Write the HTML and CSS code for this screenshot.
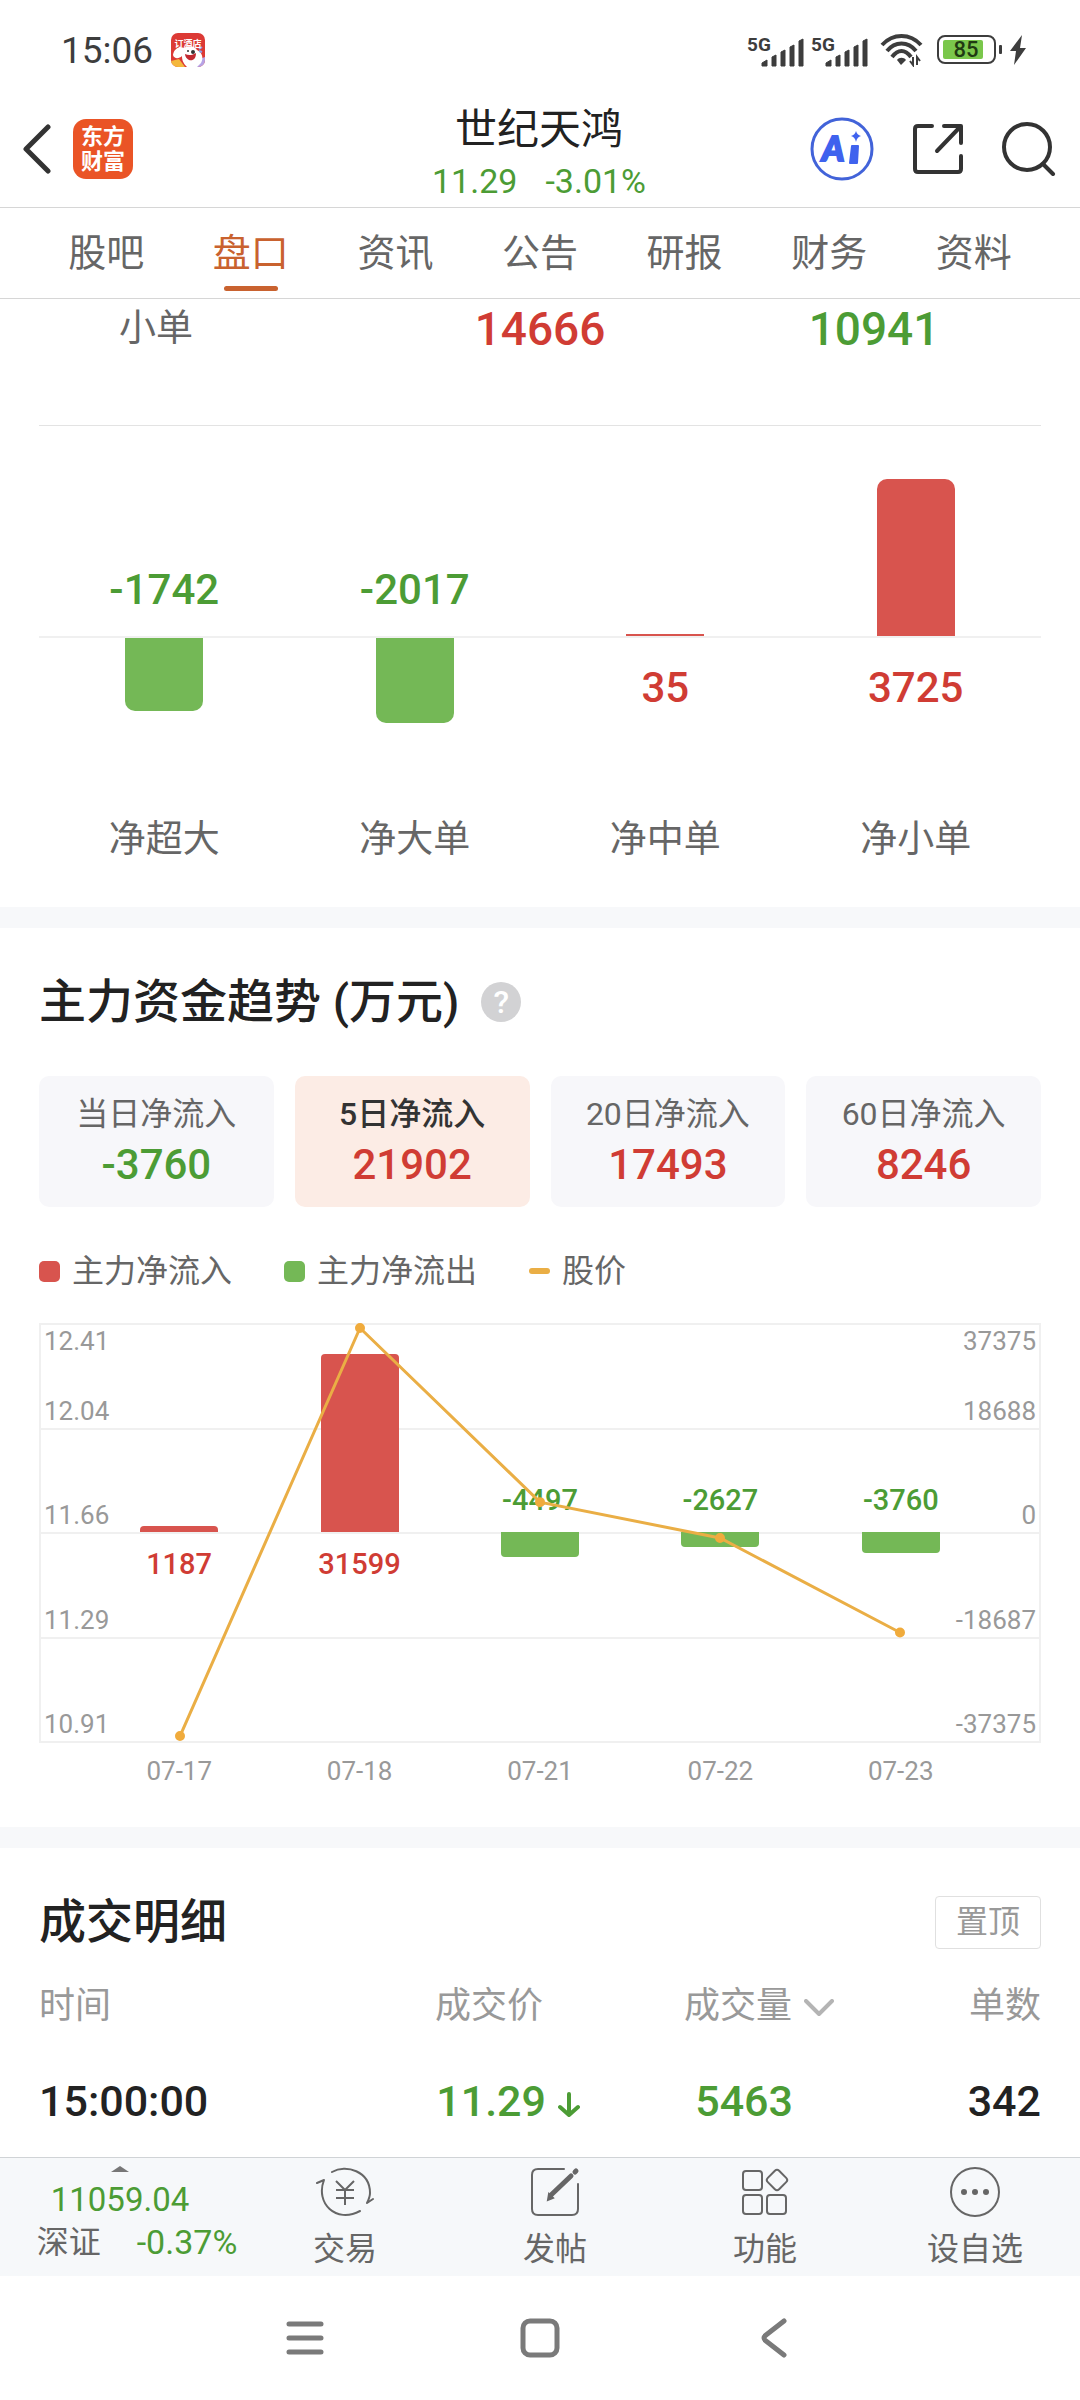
FILE: index.html
```html
<!DOCTYPE html>
<html lang="zh-CN">
<head>
    <meta charset="UTF-8">
    <meta name="viewport" content="width=device-width, initial-scale=1.0">
    <title>世纪天鸿 11.29 -3.01%</title>
    <link rel="stylesheet" href="styles.css">
</head>
<body>
    <div class="status-bar">
        <span class="clock">15:06</span>
        <svg class="notify-icon" width="34" height="34" viewBox="0 0 34 34">
            <defs><clipPath id="notifyClip"><rect width="34" height="34" rx="7"/></clipPath></defs>
            <g clip-path="url(#notifyClip)">
                <rect width="34" height="34" fill="#dc3a35"/>
                <path d="M0 28 L8 26 L14 34 H0z" fill="#f4b83c"/>
                <path d="M26 27 L34 24 V34 H24z" fill="#b6a3e6"/>
                <path d="M2 22 C3 15 9 13 13 15 C17 12 24 13 26 17 C31 19 33 25 30 30 L26 34 H16 C12 30 11 27 11 23 C8 26 3 26 2 22z" fill="#fff"/>
                <path d="M14 21 C18 23 22 22 25 20 C25 26 22 28 18 27 C16 26 14 24 14 21z" fill="#c22a32"/>
                <circle cx="17" cy="18" r="1" fill="#333"/>
                <circle cx="22" cy="19" r="2" fill="#333"/>
                <path d="M28 16 l3 -2 M28 18 l3 1" stroke="#8fa2ea" stroke-width="2"/>
            </g>
            <text x="17" y="14" text-anchor="middle" class="notify-text">订酒店</text>
        </svg>
        <div class="status-right">
            <svg width="57" height="36" viewBox="0 -4 57 36">
                <text x="0" y="15" class="signal-text">5G</text>
                <path d="M15 30 v-3 l5 -3 v6z M25 30 v-9 l4 -2 v11z M34 30 v-14 l4 -2 v16z M43 30 v-19 l4 -2 v21z M52 30 v-25 l4 -2 v27z" fill="#3d3d3d" stroke="#3d3d3d" stroke-linejoin="round"/>
            </svg>
            <svg width="57" height="36" viewBox="0 -4 57 36">
                <text x="0" y="15" class="signal-text">5G</text>
                <path d="M15 30 v-3 l5 -3 v6z M25 30 v-9 l4 -2 v11z M34 30 v-14 l4 -2 v16z M43 30 v-19 l4 -2 v21z M52 30 v-25 l4 -2 v27z" fill="#3d3d3d" stroke="#3d3d3d" stroke-linejoin="round"/>
            </svg>
            <svg class="wifi" width="43" height="34" viewBox="0 0 43 34">
                <g fill="none" stroke="#3d3d3d" stroke-width="4">
                    <path d="M2 12 C13 0 30 0 41 12"/>
                    <path d="M7 18 C15 8 28 8 36 18"/>
                    <path d="M12 24 C18 16 25 16 31 24"/>
                </g>
                <path d="M17 27 C19 24 24 24 26 27 L21 32z" fill="#3d3d3d"/>
                <path d="M33 24 v8 l-3 -4 M37 32 v-8 l3 4" fill="none" stroke="#3d3d3d" stroke-width="2"/>
            </svg>
            <svg class="battery" width="66" height="30" viewBox="0 0 66 30">
                <rect x="1" y="1" width="57" height="27" rx="7" fill="none" stroke="#3d3d3d" stroke-width="2"/>
                <rect x="6" y="5" width="40" height="19" rx="2" fill="#7ac74b"/>
                <rect x="62" y="10" width="3" height="9" rx="1" fill="#3d3d3d"/>
                <text x="29" y="22" text-anchor="middle" class="battery-text">85</text>
            </svg>
            <svg width="16" height="30" viewBox="0 0 16 30">
                <path d="M12 0 L0 16 H6 L4 30 L16 13 H10z M1 11 L7 10 M15 18 L9 19" fill="#3d3d3d"/>
            </svg>
        </div>
    </div>

    <header class="top-bar">
        <div class="top-left">
            <button class="icon-btn" aria-label="返回">
                <svg width="30" height="50" viewBox="0 0 30 50"><path d="M26 3 L4 25 L26 47" fill="none" stroke="#333" stroke-width="5" stroke-linecap="round" stroke-linejoin="round"/></svg>
            </button>
            <a href="#" class="brand">东方<br>财富</a>
        </div>
        <div class="stock">
            <h1>世纪天鸿</h1>
            <div class="quote"><span>11.29</span><span>-3.01%</span></div>
        </div>
        <div class="top-right">
            <button class="icon-btn" aria-label="AI">
                <svg width="64" height="64" viewBox="0 0 64 64">
                    <circle cx="32" cy="32" r="30" fill="none" stroke="#4263d9" stroke-width="3"/>
                    <text x="12" y="44" class="ai-text">A</text>
                    <path d="M42 29 h6 l-1 17 h-7z" fill="#3f62ee" stroke="#3f62ee" stroke-width="2" stroke-linejoin="round"/>
                    <path d="M46 14 Q47 18 51 19 Q47 20 46 25 Q45 20 41 19 Q45 18 46 14z" fill="#3f62ee"/>
                </svg>
            </button>
            <button class="icon-btn" aria-label="分享">
                <svg width="52" height="52" viewBox="0 0 52 52">
                    <path d="M20 3 H6 Q3 3 3 6 V46 Q3 49 6 49 H46 Q49 49 49 46 V33 M32 3 H49 V20 M48 4 L25 28" fill="none" stroke="#333" stroke-width="4" stroke-linecap="round" stroke-linejoin="round"/>
                </svg>
            </button>
            <button class="icon-btn" aria-label="搜索">
                <svg width="54" height="54" viewBox="0 0 54 54">
                    <circle cx="25" cy="25" r="23" fill="none" stroke="#333" stroke-width="4"/>
                    <path d="M41 42 L51 52" stroke="#333" stroke-width="4" stroke-linecap="round"/>
                </svg>
            </button>
        </div>
    </header>

    <nav class="tabs">
        <a href="#">股吧</a>
        <a href="#" class="active">盘口</a>
        <a href="#">资讯</a>
        <a href="#">公告</a>
        <a href="#">研报</a>
        <a href="#">财务</a>
        <a href="#">资料</a>
    </nav>

    <main>
        <section class="orders">
            <div class="order-row">
                <span class="order-name">小单</span>
                <span class="order-value red">14666</span>
                <span class="order-value green">10941</span>
            </div>
            <div class="net-chart">
                <div class="net-col">
                    <div class="net-up"><span class="net-value green">-1742</span></div>
                    <div class="net-down"><div class="bar fall" style="height: 73px"></div></div>
                    <div class="net-label">净超大</div>
                </div>
                <div class="net-col">
                    <div class="net-up"><span class="net-value green">-2017</span></div>
                    <div class="net-down"><div class="bar fall" style="height: 85px"></div></div>
                    <div class="net-label">净大单</div>
                </div>
                <div class="net-col">
                    <div class="net-up"><div class="bar rise flat" style="height: 2px"></div></div>
                    <div class="net-down"><span class="net-value red">35</span></div>
                    <div class="net-label">净中单</div>
                </div>
                <div class="net-col">
                    <div class="net-up"><div class="bar rise" style="height: 157px"></div></div>
                    <div class="net-down"><span class="net-value red">3725</span></div>
                    <div class="net-label">净小单</div>
                </div>
            </div>
        </section>

        <section class="trend">
            <div class="section-head">
                <h2>主力资金趋势 (万元)</h2>
                <button class="help" aria-label="说明">?</button>
            </div>
            <div class="periods">
                <button class="period"><span>当日净流入</span><b class="green">-3760</b></button>
                <button class="period selected"><span>5日净流入</span><b class="red">21902</b></button>
                <button class="period"><span>20日净流入</span><b class="red">17493</b></button>
                <button class="period"><span>60日净流入</span><b class="red">8246</b></button>
            </div>
            <div class="legend">
                <span><i class="key rise"></i>主力净流入</span>
                <span><i class="key fall"></i>主力净流出</span>
                <span><i class="key line"></i>股价</span>
            </div>
            <div class="plot">
                <div class="band first"><span>12.41</span><span>37375</span><span>12.04</span><span>18688</span></div>
                <div class="band"><span>11.66</span><span>0</span></div>
                <div class="band"><span>11.29</span><span>-18687</span></div>
                <div class="band"><span>10.91</span><span>-37375</span></div>
                <div class="days">
                    <div class="day">
                        <div class="day-up"><div class="bar rise" style="height: 3%"></div></div>
                        <div class="day-down"><span class="day-value red">1187</span></div>
                    </div>
                    <div class="day">
                        <div class="day-up"><div class="bar rise" style="height: 85%"></div></div>
                        <div class="day-down"><span class="day-value red">31599</span></div>
                    </div>
                    <div class="day">
                        <div class="day-up"><span class="day-value green">-4497</span></div>
                        <div class="day-down"><div class="bar fall" style="height: 12%"></div></div>
                    </div>
                    <div class="day">
                        <div class="day-up"><span class="day-value green">-2627</span></div>
                        <div class="day-down"><div class="bar fall" style="height: 7%"></div></div>
                    </div>
                    <div class="day">
                        <div class="day-up"><span class="day-value green">-3760</span></div>
                        <div class="day-down"><div class="bar fall" style="height: 10%"></div></div>
                    </div>
                </div>
                <svg class="price-line" viewBox="0 0 1002 420" preserveAspectRatio="none">
                    <polyline points="141,415 321,5 501,180 681,216 861,311"/>
                    <path d="M141 415h0 M321 5h0 M501 180h0 M681 216h0 M861 311h0"/>
                </svg>
            </div>
            <div class="dates">
                <span>07-17</span><span>07-18</span><span>07-21</span><span>07-22</span><span>07-23</span>
            </div>
        </section>

        <section class="trades">
            <div class="section-head">
                <h2>成交明细</h2>
                <button class="pin">置顶</button>
            </div>
            <table>
                <thead>
                    <tr>
                        <th>时间</th>
                        <th class="price">成交价</th>
                        <th class="volume">成交量<svg class="chevron" width="30" height="18" viewBox="0 0 30 18"><path d="M2 2 L15 15 L28 2" fill="none" stroke="#b4b4b4" stroke-width="4" stroke-linecap="round" stroke-linejoin="round"/></svg></th>
                        <th class="count">单数</th>
                    </tr>
                </thead>
                <tbody>
                    <tr>
                        <td>15:00:00</td>
                        <td class="green">11.29<svg class="down" width="22" height="26" viewBox="0 0 22 26"><path d="M11 2 V23 M2 15 L11 23 L20 15" fill="none" stroke="#4c9c35" stroke-width="4" stroke-linecap="round" stroke-linejoin="round"/></svg></td>
                        <td class="green volume">5463</td>
                        <td>342</td>
                    </tr>
                </tbody>
            </table>
        </section>
    </main>

    <footer class="bottom-bar">
        <a href="#" class="index">
            <svg width="18" height="6" viewBox="0 0 18 6"><path d="M0 6 L9 0 L18 6z" fill="#777"/></svg>
            <span class="index-value">11059.04</span>
            <span class="index-row"><span>深证</span><span class="green">-0.37%</span></span>
        </a>
        <a href="#" class="action">
            <svg width="58" height="50" viewBox="0 0 58 50" fill="none" stroke="#666" stroke-width="2" stroke-linecap="round" stroke-linejoin="round">
                <path d="M16 5 C30 -3 54 4 54 26 Q54 30 51 36 L57 32"/>
                <path d="M1 16 L8 13 C-1 36 20 57 44 44"/>
                <path d="M20 14 L29 23 L38 14 M29 23 V38 M20 23 H38 M20 31 H38" stroke-linecap="butt"/>
            </svg>
            <span>交易</span>
        </a>
        <a href="#" class="action">
            <svg width="50" height="50" viewBox="0 0 50 50" fill="none" stroke="#666" stroke-width="2" stroke-linecap="round">
                <path d="M34 2 H8 Q2 2 2 8 V42 Q2 48 8 48 H42 Q48 48 48 42 V17"/>
                <path d="M21 28 L41 9" stroke-width="5"/>
                <path d="M18 33 L19 27 L23 31z" fill="#666"/>
                <path d="M45 5 L46 4" stroke-width="5"/>
            </svg>
            <span>发帖</span>
        </a>
        <a href="#" class="action">
            <svg width="48" height="50" viewBox="0 0 48 50" fill="none" stroke="#666" stroke-width="2">
                <rect x="2" y="4" width="19" height="19" rx="3"/>
                <rect x="2" y="28" width="19" height="19" rx="3"/>
                <rect x="26" y="28" width="19" height="19" rx="3"/>
                <rect x="28" y="5" width="16" height="16" rx="3" transform="rotate(45 36 13)"/>
            </svg>
            <span>功能</span>
        </a>
        <a href="#" class="action">
            <svg width="50" height="50" viewBox="0 0 50 50">
                <circle cx="25" cy="25" r="24" fill="none" stroke="#666" stroke-width="2"/>
                <circle cx="14" cy="25" r="3" fill="#666"/>
                <circle cx="25" cy="25" r="3" fill="#666"/>
                <circle cx="36" cy="25" r="3" fill="#666"/>
            </svg>
            <span>设自选</span>
        </a>
    </footer>

    <div class="system-nav">
        <button class="icon-btn" aria-label="最近任务">
            <svg width="42" height="42" viewBox="0 0 42 42"><path d="M5 7 H37 M5 21 H37 M5 35 H37" stroke="#7a7a7a" stroke-width="5" stroke-linecap="round"/></svg>
        </button>
        <button class="icon-btn" aria-label="主屏幕">
            <svg width="42" height="42" viewBox="0 0 42 42"><rect x="4" y="4" width="34" height="34" rx="7" fill="none" stroke="#7a7a7a" stroke-width="5"/></svg>
        </button>
        <button class="icon-btn" aria-label="后退">
            <svg width="42" height="42" viewBox="0 0 42 42"><path d="M30 4 L12 18 Q8 21 12 24 L30 38" fill="none" stroke="#7a7a7a" stroke-width="5" stroke-linecap="round"/></svg>
        </button>
    </div>
</body>
</html>
```
FILE: styles.css
```css
* {
    box-sizing: border-box;
}
body {
    margin: 0;
    background-color: #fff;
    color: #222;
    font-family: Roboto, "Noto Sans CJK SC", sans-serif;
    font-size: 32px;
}
h1, h2 {
    margin: 0;
    font-weight: 500;
}
a {
    color: inherit;
    text-decoration: none;
}
button {
    margin: 0;
    padding: 0;
    border: none;
    background: none;
    color: inherit;
    font: inherit;
    cursor: pointer;
}
svg {
    display: block;
}
.red {
    color: #d03c34;
}
.green {
    color: #4c9c35;
}

/* status bar */
.status-bar {
    display: flex;
    align-items: center;
    height: 100px;
    padding: 0 54px 0 61px;
}
.clock {
    font-size: 37px;
    color: #3d3d3d;
}
.notify-icon {
    margin-left: 18px;
}
.notify-text {
    font-size: 9px;
    font-weight: 700;
    fill: #fff;
}
.status-right {
    display: flex;
    align-items: center;
    gap: 7px;
    margin-left: auto;
}
.signal-text {
    font-size: 19px;
    font-weight: 700;
    fill: #3d3d3d;
}
.wifi {
    margin-left: 5px;
}
.battery {
    margin-left: 7px;
}
.battery-text {
    font-size: 22px;
    font-weight: 500;
    fill: #1f3a12;
}

/* header */
.top-bar {
    display: grid;
    grid-template-columns: 1fr auto 1fr;
    align-items: center;
    height: 108px;
    padding: 0 24px 0 22px;
    border-bottom: 1px solid #d6d6d6;
}
.top-left, .top-right {
    display: flex;
    align-items: center;
    margin-bottom: 10px;
}
.top-left {
    gap: 21px;
}
.top-right {
    justify-content: flex-end;
    gap: 38px;
}
.brand {
    width: 60px;
    height: 60px;
    padding-top: 5px;
    border-radius: 13px;
    background-color: #ea5426;
    color: #fff;
    font-size: 22px;
    font-weight: 700;
    line-height: 25px;
    text-align: center;
}
.stock {
    text-align: center;
}
h1 {
    font-size: 42px;
    font-weight: 400;
    line-height: 54px;
}
.quote {
    display: flex;
    justify-content: center;
    gap: 28px;
    color: #4c9c35;
    font-size: 34px;
    line-height: 48px;
}
.ai-text {
    font-family: Lato, sans-serif;
    font-size: 34px;
    font-weight: 900;
    font-style: italic;
    fill: #3f62ee;
    stroke: #3f62ee;
    stroke-width: 2px;
}

/* tabs */
.tabs {
    display: flex;
    height: 91px;
    padding: 0 34px;
    border-bottom: 1px solid #d6d6d6;
    color: #666;
    font-size: 38px;
    line-height: 90px;
}
.tabs a {
    position: relative;
    flex: 1;
    text-align: center;
}
.tabs .active {
    color: #c9622f;
}
.tabs .active::after {
    content: "";
    position: absolute;
    left: 50%;
    bottom: 7px;
    width: 54px;
    height: 5px;
    margin-left: -27px;
    border-radius: 3px;
    background-color: #c9622f;
}

/* order sizes */
section {
    padding: 0 39px;
}
.orders {
    border-bottom: 21px solid #f7f8fa;
}
.order-row {
    display: grid;
    grid-template-columns: repeat(3, 1fr);
    align-items: center;
    margin-bottom: 66px;
    line-height: 60px;
    text-align: center;
}
.order-name {
    padding-left: 80px;
    color: #666;
    font-size: 37px;
    text-align: left;
}
.order-value {
    font-size: 46px;
    font-weight: 500;
}
.net-chart {
    display: grid;
    grid-template-columns: repeat(4, 1fr);
    padding-bottom: 39px;
    border-top: 1px solid #e3e3e3;
}
.net-up, .net-down, .day-up, .day-down {
    display: flex;
    flex-direction: column;
    align-items: center;
}
.net-up {
    justify-content: flex-end;
    height: 212px;
    border-bottom: 2px solid #f0f0f0;
}
.net-down {
    height: 174px;
}
.net-value {
    margin: 24px 0 20px;
    font-size: 42px;
    font-weight: 500;
    line-height: 52px;
}
.net-label {
    color: #666;
    font-size: 37px;
    line-height: 56px;
    text-align: center;
}
.bar {
    width: 78px;
}
.rise {
    border-radius: 10px 10px 0 0;
    background-color: #d8544e;
}
.fall {
    border-radius: 0 0 10px 10px;
    background-color: #74b856;
}
.flat {
    border-radius: 0;
}

/* capital trend */
.section-head {
    display: flex;
    align-items: center;
    padding-top: 39px;
}
h2 {
    font-size: 47px;
    line-height: 70px;
}
.help {
    width: 40px;
    height: 40px;
    margin-left: 22px;
    border-radius: 50%;
    background-color: #d2d2d4;
    color: #fff;
    font-size: 32px;
    font-weight: 500;
    line-height: 40px;
}
.trend {
    padding-bottom: 38px;
    border-bottom: 21px solid #f7f8fa;
}
.periods {
    display: grid;
    grid-template-columns: repeat(4, 1fr);
    gap: 21px;
    margin-top: 39px;
}
.period {
    padding: 16px 0 13px;
    border-radius: 10px;
    background-color: #f7f7fa;
    color: #666;
}
.period span, .period b {
    display: block;
    line-height: 44px;
}
.period b {
    font-size: 42px;
    font-weight: 500;
    line-height: 58px;
}
.period.selected {
    background-color: #fcece5;
}
.period.selected span {
    color: #333;
    font-weight: 500;
}
.legend {
    display: flex;
    gap: 52px;
    margin: 42px 0 30px;
    color: #666;
    line-height: 44px;
}
.legend span {
    display: flex;
    align-items: center;
    gap: 12px;
}
.key {
    width: 21px;
    height: 21px;
    border-radius: 5px;
}
.key.line {
    height: 6px;
    border-radius: 3px;
    background-color: #eaae45;
}
.plot {
    position: relative;
    display: grid;
    grid-template-rows: repeat(4, 1fr);
    height: 420px;
    border: 2px solid #f0f0f0;
    border-top: none;
}
.band {
    display: grid;
    grid-template-columns: 1fr 1fr;
    align-content: end;
    padding: 0 3px;
    border-top: 2px solid #f0f0f0;
    color: #999;
    font-size: 26px;
    line-height: 33px;
}
.band.first {
    align-content: space-between;
}
.band span:nth-child(even) {
    text-align: right;
}
.days {
    position: absolute;
    inset: 0 -2px;
}
.days, .dates {
    display: grid;
    grid-template-columns: repeat(5, 1fr);
    padding: 0 5%;
}
.day {
    display: grid;
    grid-template-rows: 1fr 1fr;
}
.day-up {
    justify-content: flex-end;
}
.day-value {
    margin: 14px 0;
    font-size: 29px;
    font-weight: 500;
    line-height: 36px;
}
.day .rise {
    border-radius: 4px 4px 0 0;
}
.day .fall {
    border-radius: 0 0 4px 4px;
}
.price-line {
    position: absolute;
    top: 0;
    left: -2px;
    width: calc(100% + 4px);
    height: 100%;
    overflow: visible;
    fill: none;
    stroke: #eaae45;
    stroke-width: 3;
}
.price-line * {
    vector-effect: non-scaling-stroke;
}
.price-line path {
    stroke: #f0ab3c;
    stroke-width: 10;
    stroke-linecap: round;
}
.dates {
    margin-top: 10px;
    color: #999;
    font-size: 26px;
    line-height: 36px;
    text-align: center;
}

/* trades */
.trades .section-head {
    justify-content: space-between;
    margin-bottom: 5px;
}
.pin {
    width: 106px;
    height: 53px;
    border: 1px solid #e0e0e0;
    border-radius: 4px;
    color: #999;
    line-height: 48px;
}
table {
    width: 100%;
    border-collapse: collapse;
    table-layout: fixed;
    text-align: right;
}
th, td {
    padding: 0;
}
th {
    height: 80px;
    color: #999;
    font-size: 36px;
    font-weight: 400;
}
th:first-child, td:first-child {
    text-align: left;
}
th.price {
    width: 250px;
    padding-right: 37px;
}
th.volume {
    width: 254px;
}
th.count {
    width: 207px;
}
td {
    height: 115px;
    padding-top: 3px;
    font-size: 43px;
    font-weight: 500;
}
td.volume {
    padding-right: 41px;
}
.chevron, .down {
    display: inline-block;
    margin-left: 12px;
    vertical-align: middle;
}

/* bottom bar */
.bottom-bar {
    display: grid;
    grid-template-columns: 8fr repeat(4, 7fr);
    height: 119px;
    border-top: 1px solid #d0d3d6;
    background-color: #f6f8fa;
    color: #666;
}
.index {
    display: flex;
    flex-direction: column;
    align-items: center;
    padding-top: 8px;
}
.index-value {
    margin-top: 6px;
    color: #4c9c35;
    font-size: 33px;
    line-height: 43px;
}
.index-row {
    display: flex;
    gap: 36px;
    padding-left: 34px;
    line-height: 43px;
}
.index-row .green {
    font-size: 34px;
}
.action {
    display: flex;
    flex-direction: column;
    align-items: center;
    gap: 9px;
    padding-top: 9px;
    line-height: 46px;
}

/* system buttons */
.system-nav {
    display: flex;
    justify-content: center;
    align-items: center;
    gap: 193px;
    height: 124px;
}
```
